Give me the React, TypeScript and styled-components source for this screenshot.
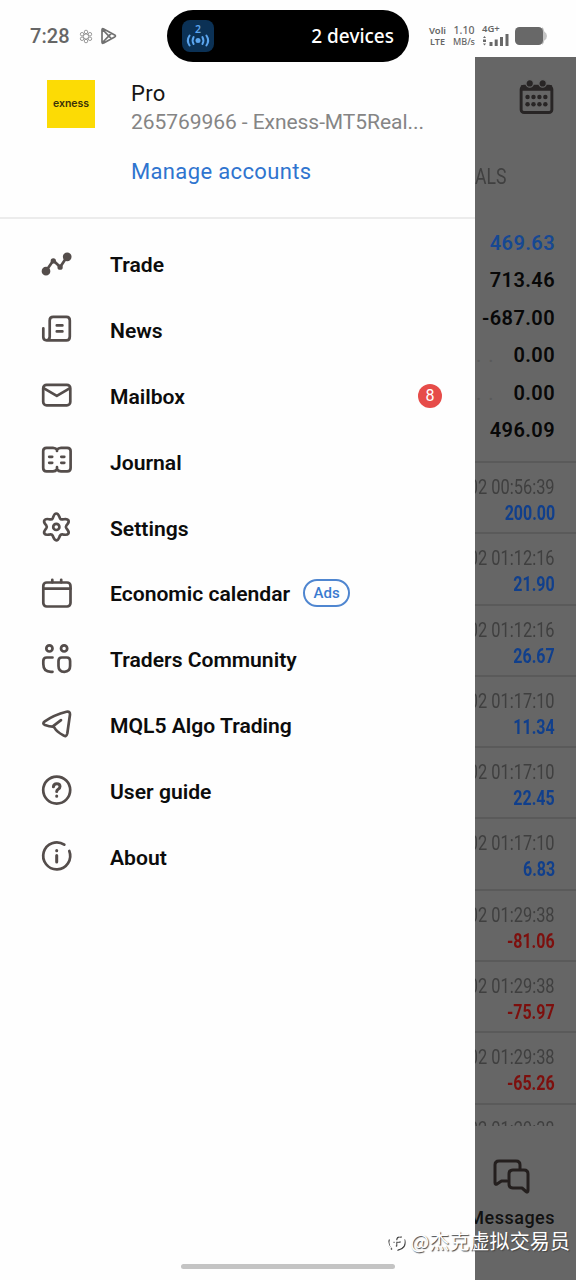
import React from "react";
import styled, { createGlobalStyle } from "styled-components";

const GlobalStyle = createGlobalStyle`
  * { box-sizing: border-box; }
  body { margin: 0; background: #fff; font-family: Roboto, "Liberation Sans", sans-serif; }
`;

const Screen = styled.div`
  position: relative;
  width: 576px;
  height: 1280px;
  overflow: hidden;
  background: #fefefe;
  display: flex;
  flex-direction: column;
`;

/* ---------- status bar ---------- */
const StatusBar = styled.header`
  height: 57px;
  flex: none;
  display: flex;
  align-items: flex-start;
  padding: 10px 29px 0 30px;
  color: #666;
`;
const Clock = styled.div`
  display: flex;
  align-items: center;
  width: 137px;
  height: 52px;
  font-size: 20px;
  font-weight: 500;
  letter-spacing: 0.1px;
  svg:first-of-type { margin-left: 9px; }
  svg:last-of-type { margin-left: 7px; }
`;
const Island = styled.div`
  position: relative;
  z-index: 2;
  width: 242px;
  height: 52px;
  border-radius: 26px;
  background: #000;
  color: #fff;
  display: flex;
  align-items: center;
  justify-content: space-between;
  padding: 0 15px 0 15px;
  font-family: "Noto Sans", "Open Sans", sans-serif;
  font-size: 19px;
  font-weight: 500;
`;
const Meters = styled.div`
  display: flex;
  align-items: center;
  height: 52px;
  margin-left: 20px;
`;
const Tiny = styled.div<{ $w: number; $bold?: boolean }>`
  width: ${(p) => p.$w}px;
  font-family: "Noto Sans", sans-serif;
  font-size: 9px;
  line-height: 11px;
  font-weight: ${(p) => (p.$bold ? 600 : 500)};
  text-align: center;
  white-space: nowrap;
  margin-right: 7px;
  span { display: block; }
  span:first-child { font-size: ${(p) => (p.$bold ? 9.5 : 10.5)}px; }
`;
const Signal = styled.div`
  width: 28px;
  height: 22px;
  margin: -2px 5px 0 0;
  font: 600 9.5px/10px "Noto Sans", sans-serif;
  svg { display: block; }
`;

/* ---------- layout ---------- */
const Body = styled.main`
  flex: 1;
  display: flex;
  min-height: 0;
`;
const Drawer = styled.aside`
  width: 475px;
  flex: none;
  background: #fefefe;
`;
const Account = styled.section`
  height: 162px;
  border-bottom: 2px solid #ececec;
  display: flex;
  padding: 23px 0 0 47px;
`;
const BrokerLogo = styled.div`
  width: 48px;
  height: 48px;
  background: #fcdb05;
  color: #3a3208;
  display: flex;
  align-items: center;
  justify-content: center;
  font: 600 10.5px/12px Inter, sans-serif;
`;
const AccountText = styled.div`
  margin-left: 36px;
  display: flex;
  flex-direction: column;
`;
const AccountName = styled.div`
  font-size: 22px;
  line-height: 28px;
  color: #151515;
  letter-spacing: 0.3px;
`;
const AccountId = styled.div`
  font-size: 21px;
  line-height: 29px;
  color: #858585;
  letter-spacing: -0.06px;
  white-space: nowrap;
`;
const Manage = styled.a`
  margin-top: 20px;
  font-size: 22px;
  line-height: 30px;
  color: #2f74cf;
  letter-spacing: 0.35px;
`;
const Menu = styled.nav`
  padding-top: 13px;
`;
const MenuItem = styled.div`
  height: 65.8px;
  display: flex;
  align-items: center;
  padding: 0 33px 0 39px;
  font-size: 21.1px;
  font-weight: 600;
  color: #0c0c0c;
`;
const MenuIcon = styled.svg`
  width: 36px;
  height: 36px;
  flex: none;
  margin-right: 35px;
  fill: none;
  stroke: #544d4b;
  stroke-width: 2.7;
  stroke-linecap: round;
  stroke-linejoin: round;
`;
const AdsTag = styled.span`
  width: 47px;
  height: 28px;
  margin: -2px 0 0 13px;
  border: 2px solid #4f86d0;
  border-radius: 14px;
  color: #3a7bd0;
  font-size: 15px;
  font-weight: 500;
  line-height: 25px;
  text-align: center;
`;
const Count = styled.span`
  width: 24px;
  height: 24px;
  margin-left: auto;
  border-radius: 50%;
  background: #e64c49;
  color: #fff;
  font-size: 16px;
  font-weight: 400;
  line-height: 24px;
  text-align: center;
`;

/* ---------- dimmed history screen ---------- */
const History = styled.section`
  flex: 1;
  min-width: 0;
  overflow: hidden;
  background: #666;
  display: flex;
  flex-direction: column;
`;
const HistoryTop = styled.div`
  height: 83px;
  flex: none;
  display: flex;
  justify-content: flex-end;
  padding: 22px 22px 0 0;
`;
const Tab = styled.div`
  height: 74px;
  flex: none;
  padding-top: 24px;
  font-size: 22px;
  line-height: 26px;
  color: #404040;
  span { display: inline-block; transform: scaleX(0.8); transform-origin: left; }
`;
const Summary = styled.div`
  height: 249px;
  flex: none;
  padding: 10px 21px 0 0;
  border-bottom: 2px solid #5a5a5a;
`;
const SummaryRow = styled.div<{ $blue?: boolean }>`
  height: 37.5px;
  display: flex;
  align-items: center;
  justify-content: flex-end;
  white-space: nowrap;
  font-size: 20px;
  font-weight: 600;
  letter-spacing: 0.4px;
  color: ${(p) => (p.$blue ? "#164893" : "#080808")};
`;
const Leader = styled.i`
  margin-right: auto;
  font-style: normal;
  color: #5a5a5a;
  font-weight: 400;
  letter-spacing: 7px;
  padding-left: 1px;
`;
const Deals = styled.div`
  height: 663px;
  flex: none;
  overflow: hidden;
`;
const Deal = styled.div`
  height: 71.3px;
  border-bottom: 2px solid #5a5a5a;
  padding: 11px 21px 0 0;
  display: flex;
  flex-direction: column;
  align-items: flex-end;
  white-space: nowrap;
`;
const DealTime = styled.div`
  font-size: 20px;
  line-height: 26px;
  color: #3f3f3f;
  transform: scaleX(0.82);
  transform-origin: right;
`;
const DealProfit = styled.div<{ $loss?: boolean }>`
  font-size: 20px;
  line-height: 26px;
  font-weight: 700;
  color: ${(p) => (p.$loss ? "#7d0f0d" : "#103f8c")};
  transform: scaleX(0.8);
  transform-origin: right;
`;
const Messages = styled.div`
  flex: 1;
  display: flex;
  flex-direction: column;
  align-items: flex-end;
  padding: 32px 21px 0 0;
  color: #111;
  font-size: 18px;
  line-height: 24px;
  font-weight: 500;
  letter-spacing: 0.5px;
  svg { margin: 0 25px 12px 0; }
`;

/* ---------- overlays ---------- */
const HomeBar = styled.div`
  position: absolute;
  left: 181px;
  top: 1264px;
  width: 214px;
  height: 5px;
  border-radius: 3px;
  background: #c4c4c4;
`;
const Watermark = styled.div`
  position: absolute;
  right: 6px;
  top: 1226px;
  display: flex;
  align-items: center;
  gap: 4px;
  color: #fff;
  font: 400 20px/30px "Noto Sans CJK SC", sans-serif;
  letter-spacing: 0.1px;
  white-space: nowrap;
  text-shadow: 1px 1px 1px #444;
  svg { filter: drop-shadow(1px 1px 0.5px #444); }
`;

type Item = { label: string; icon: React.ReactNode; ads?: boolean; count?: number };

const items: Item[] = [
  {
    label: "Trade",
    icon: (
      <>
        <path d="M7 24 14.3 13.4l6.9 6.6L28 9.700" />
        <circle cx="7" cy="24.2" r="3" fill="#544d4b" />
        <circle cx="28.2" cy="9.8" r="3" fill="#544d4b" />
        <circle cx="14.3" cy="13.9" r="1.3" fill="#544d4b" />
        <circle cx="21.1" cy="20.2" r="1.3" fill="#544d4b" />
      </>
    ),
  },
  {
    label: "News",
    icon: (
      <path d="M10.7 24V7.4Q10.7 3.800 14.200 3.800h13.200Q30.800 3.800 30.800 7.400v16q0 3.900-3.400 3.900H7.700Q4.300 27.300 4.300 24V15.300M10.700 23.500q0 3.800-3 3.800M17.800 12.400h5.600M17.800 18.400h5.600" />
    ),
  },
  {
    label: "Mailbox",
    icon: (
      <>
        <rect x="4.2" y="6.8" width="27.1" height="20.6" rx="3.4" />
        <path d="m5 10.300 12.800 7.600 12.800-7.600" />
      </>
    ),
  },
  {
    label: "Journal",
    icon: (
      <path
        transform="translate(0 -1)"
        d="M18 6.8q-1.5-2-4-2H7.6Q4.2 4.8 4.2 8v17q0 3.4 3.4 3.4H14q2.5 0 4-2 1.5 2 4 2h6.2q3.4 0 3.400-3.400V8q0-3.200-3.400-3.200H22q-2.500 0-4 2ZM18 6v2M18 27v-2.800M10.200 13.800h3M10.200 19.800h3M22.300 13.800h3M22.300 19.800h3"
      />
    ),
  },
  {
    label: "Settings",
    icon: (
      <>
        <path d="M13.7 8.3C14.7 6 15 3.5 17.3 3.5S20 6 21 8.3c.5 1 1.5 1.3 2.7 1.1 2.2-.3 4.3-1.1 5.6.7 1.400 2.200-.5 3.400-1.900 5.300-.7 1-.7 1.900 0 2.900 1.400 1.900 3.300 3.400 1.900 5.400-1.300 1.800-3.400 1-5.600.7-1.200-.2-2.200.2-2.700 1.200-1 2.200-1.400 4.700-3.700 4.700s-2.600-2.500-3.600-4.700c-.5-1-1.500-1.400-2.700-1.200-2.200.3-4.300 1.100-5.500-.7-1.400-2 .4-3.500 1.800-5.400.7-1 .7-1.900 0-2.900-1.400-1.900-3.200-3.100-1.800-5.300 1.200-1.800 3.300-1 5.500-.7 1.200.2 2.200-.1 2.700-1.100Z" />
        <circle cx="17.3" cy="16.9" r="3.1" />
      </>
    ),
  },
  {
    label: "Economic calendar",
    ads: true,
    icon: (
      <>
        <rect x="4.3" y="6.5" width="27.2" height="24" rx="3.4" />
        <path d="M4.500 12.700h27M13.300 3.800v2.500M22.200 3.800v2.500" />
      </>
    ),
  },
  {
    label: "Traders Community",
    icon: (
      <>
        <circle cx="10.4" cy="6.4" r="3.1" />
        <circle cx="25.1" cy="6.4" r="3.1" />
        <path d="M13.500 15.500H7.800Q4.300 15.500 4.300 19v3q0 7.800 7.700 7.800h1.500M22.800 15.500h5q3.300 0 3.300 3.600v5q0 5.700-5.800 5.700T19.500 24v-5q0-3.500 3.300-3.500Z" />
      </>
    ),
  },
  {
    label: "MQL5 Algo Trading",
    icon: (
      <path d="M13.500 19.600l8.500-6.500M13.500 19.600Q10.500 19.600 6 18 2.800 16.500 5.800 14.300 15 8 27.500 4.800 31.200 4 31 7.500L28.300 26.500Q27.300 30.500 24 28.200 17.500 24.500 16 21.500 15.200 19.700 13.500 19.600Z" />
    ),
  },
  {
    label: "User guide",
    icon: (
      <>
        <circle cx="17.7" cy="17.1" r="13.5" />
        <path d="M14.400 13.800q.2-3.100 3.300-3.100 3.300 0 3.300 2.900 0 1.700-1.800 2.700-1.500.9-1.500 2.300M17.700 23v.3" strokeWidth="3" />
      </>
    ),
  },
  {
    label: "About",
    icon: (
      <>
        <path d="M30.300 12a13.500 13.500 0 1 1-5-6.300" />
        <path d="M17.700 16.500v6.500M17.700 11.600v.1" strokeWidth="3" />
      </>
    ),
  },
];
items[2].count = 8;

const summary = ["469.63", "713.46", "-687.00", "0.00", "0.00", "496.09"];

const deals: [string, string][] = [
  ["00:56:39", "200.00"],
  ["01:12:16", "21.90"],
  ["01:12:16", "26.67"],
  ["01:17:10", "11.34"],
  ["01:17:10", "22.45"],
  ["01:17:10", "6.83"],
  ["01:29:38", "-81.06"],
  ["01:29:38", "-75.97"],
  ["01:29:38", "-65.26"],
  ["01:29:38", ""],
];

const GearIcon = () => (
  <svg width="14" height="15" viewBox="0 0 16 16" fill="none" stroke="#8c8c8c" strokeWidth="1">
    <circle cx="8" cy="8" r="3" />
    <circle cx="8" cy="2.8" r="2" />
    <circle cx="8" cy="13.2" r="2" />
    <circle cx="3.5" cy="5.4" r="2" />
    <circle cx="12.5" cy="5.4" r="2" />
    <circle cx="3.5" cy="10.6" r="2" />
    <circle cx="12.5" cy="10.6" r="2" />
  </svg>
);

const PlayIcon = () => (
  <svg width="17" height="18" viewBox="0 0 17 18" fill="none" stroke="#707070" strokeWidth="1.7" strokeLinejoin="round">
    <path d="M2 2.8q0-1.8 1.7-.9l11 6q1.5 1 0 2l-11 6Q2 17 2 15ZM2.500 2.500l8.800 9.200M2.500 15.500l8.800-9.200" />
  </svg>
);

const HotspotIcon = () => (
  <svg width="32" height="32" viewBox="0 0 32 32" fill="none" stroke="#5ba5ee" strokeWidth="2" strokeLinecap="round">
    <rect width="32" height="32" rx="8" fill="#0b3155" stroke="none" />
    <text x="16" y="12.800" textAnchor="middle" fontSize="10.5" fontWeight="600" fill="#5ba5ee" stroke="none">2</text>
    <circle cx="16" cy="20.500" r="2.5" fill="#5ba5ee" stroke="none" />
    <path d="M11.600 17q-2 3.500 0 7M20.400 17q2 3.500 0 7M7.600 15.500q-3.500 5 0 10M24.400 15.500q3.500 5 0 10" />
  </svg>
);

const SignalBars = () => (
  <svg width="28" height="12" viewBox="0 0 28 12" fill="#686868">
    <path d="M1 4l1.500-2L4 4ZM1 5.500h3V8H1zM1 9.500h3l-1.500 2ZM7.500 8h3v4h-3zM12.700 5.500h3V12h-3zM18 3h3v9h-3zM23.500 0h3v12h-3z" />
  </svg>
);

const BatteryIcon = () => (
  <svg width="32" height="20" viewBox="0 0 32 20">
    <path d="M27 1q2 1 2.300 4.500 2.700 1.500 2.700 4.500t-2.700 4.500Q29 18 27 19Z" fill="#c4c4c4" />
    <rect x="0" y="1" width="28" height="18" rx="4.500" fill="#686868" />
  </svg>
);

const CalendarIcon = () => (
  <svg width="35" height="36" viewBox="0 0 36 37">
    <rect x="2.200" y="7.500" width="31.600" height="27" rx="3" fill="none" stroke="#282525" strokeWidth="3" />
    <path d="M2 6.500h32V12H2z" fill="#282525" />
    <circle cx="11" cy="4.500" r="3.800" fill="#282525" stroke="#666" strokeWidth="1.200" />
    <circle cx="24.300" cy="4.500" r="3.800" fill="#282525" stroke="#666" strokeWidth="1.200" />
    {[18.5, 26].map((y) =>
      [8.8, 14.9, 21, 27.1].map((x) => <circle key={`${x}-${y}`} cx={x} cy={y} r="2.300" fill="#282525" />)
    )}
  </svg>
);

const ChatIcon = () => (
  <svg width="38" height="36" viewBox="0 0 38 36" fill="none" stroke="#241f1e" strokeWidth="3" strokeLinejoin="round" strokeLinecap="round">
    <path d="M15 23H9.500L5 26q-2 .8-2-1.600V7q0-4 4-4h17q4 0 4 4v4" />
    <path d="M21 12h11q4 0 4 4v16.500q0 2.500-2 1L30 30h-9q-4 0-4-4V16q0-4 4-4Z" />
  </svg>
);

const WatermarkLogo = () => (
  <svg width="20" height="20" viewBox="0 0 20 20" fill="none" stroke="#fff" strokeWidth="1.600" strokeLinecap="round">
    <path d="M17.500 8q2 8-6.500 10M2 8q-1.500 5 2.500 9M14 5q-4-1-4.500 3v6M7 10h6" />
  </svg>
);

export default function App() {
  return (
    <Screen>
      <GlobalStyle />
      <StatusBar>
        <Clock>
          7:28
          <GearIcon />
          <PlayIcon />
        </Clock>
        <Island>
          <HotspotIcon />
          2 devices
        </Island>
        <Meters>
          <Tiny $w={17} $bold><span>Voli</span><span>LTE</span></Tiny>
          <Tiny $w={22}><span>1.10</span><span>MB/s</span></Tiny>
          <Signal>
            4G+
            <SignalBars />
          </Signal>
          <BatteryIcon />
        </Meters>
      </StatusBar>
      <Body>
        <Drawer>
          <Account>
            <BrokerLogo>exness</BrokerLogo>
            <AccountText>
              <AccountName>Pro</AccountName>
              <AccountId>265769966 - Exness-MT5Real...</AccountId>
              <Manage>Manage accounts</Manage>
            </AccountText>
          </Account>
          <Menu>
            {items.map((item) => (
              <MenuItem key={item.label}>
                <MenuIcon viewBox="0 0 36 36">{item.icon}</MenuIcon>
                {item.label}
                {item.ads && <AdsTag>Ads</AdsTag>}
                {item.count && <Count>{item.count}</Count>}
              </MenuItem>
            ))}
          </Menu>
        </Drawer>
        <History>
          <HistoryTop><CalendarIcon /></HistoryTop>
          <Tab><span>ALS</span></Tab>
          <Summary>
            {summary.map((value, i) => (
              <SummaryRow key={i} $blue={i === 0}>
                {value === "0.00" && <Leader>..</Leader>}
                {value}
              </SummaryRow>
            ))}
          </Summary>
          <Deals>
            {deals.map(([time, profit], i) => (
              <Deal key={i}>
                <DealTime>02 {time}</DealTime>
                <DealProfit $loss={profit.startsWith("-")}>{profit}</DealProfit>
              </Deal>
            ))}
          </Deals>
          <Messages>
            <ChatIcon />
            Messages
          </Messages>
        </History>
      </Body>
      <HomeBar />
      <Watermark>
        <WatermarkLogo />
        @杰克虚拟交易员
      </Watermark>
    </Screen>
  );
}
